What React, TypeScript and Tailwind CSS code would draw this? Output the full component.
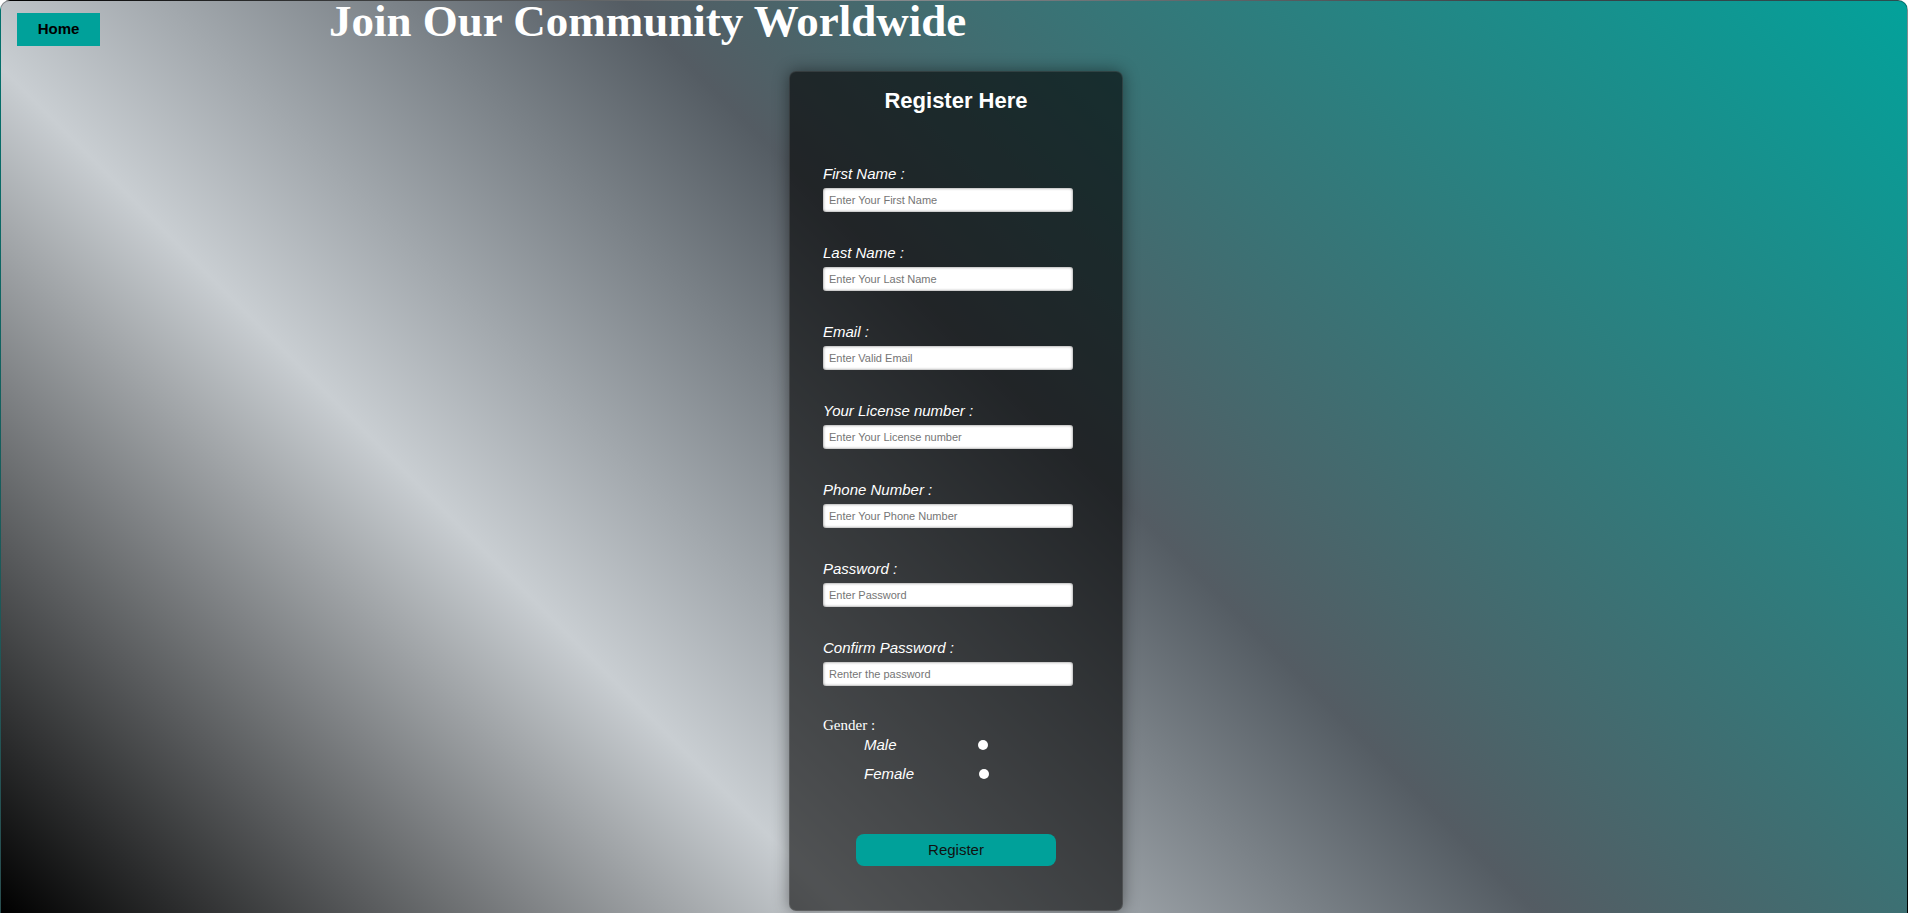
const fields = [
  { label: "First Name :", placeholder: "Enter Your First Name", type: "text" },
  { label: "Last Name :", placeholder: "Enter Your Last Name", type: "text" },
  { label: "Email :", placeholder: "Enter Valid Email", type: "email" },
  { label: "Your License number :", placeholder: "Enter Your License number", type: "text" },
  { label: "Phone Number :", placeholder: "Enter Your Phone Number", type: "tel" },
  { label: "Password :", placeholder: "Enter Password", type: "password" },
  { label: "Confirm Password :", placeholder: "Renter the password", type: "password" },
]

export default function App() {
  return (
    <div className="min-h-screen rounded-t-[10px] border-x border-t border-black/30 bg-[linear-gradient(45deg,#000_0%,#c9ced2_30%,#545c63_54.5%,#03a29b_100%)] font-['Liberation_Sans',Arial,sans-serif]">
      <header className="flex flex-row items-start">
        <a
          href="#"
          className="ml-[16px] mt-[12px] flex h-[33px] w-[83px] items-center justify-center bg-[#00a19a] text-[15px] font-bold text-black"
        >
          Home
        </a>
        <h1 className="ml-[229px] font-['Liberation_Serif','Times_New_Roman',serif] text-[45px] font-bold leading-[40px] text-white">
          Join Our Community Worldwide
        </h1>
      </header>

      <form
        className="ml-[788px] mt-[25px] flex h-[840px] w-[334px] flex-col rounded-[7px] border border-white/10 bg-black/60 px-[33px] pt-[16px] shadow-[0_0_16px_rgba(0,0,0,0.45)]"
        onSubmit={(e) => e.preventDefault()}
      >
        <h2 className="text-center text-[22px] font-bold leading-[26px] text-white">Register Here</h2>

        <div className="mt-[51px] flex flex-col gap-[32px]">
          {fields.map((f) => (
            <div key={f.label} className="flex flex-col">
              <label className="text-[15px] italic leading-[17px] text-white">{f.label}</label>
              <input
                type={f.type}
                placeholder={f.placeholder}
                className="mt-[6px] h-[24px] w-[250px] rounded-[3px] bg-white px-[6px] text-[11px] text-black shadow-[inset_0_0_3px_rgba(0,0,0,0.55)] outline-none placeholder:text-[#757575]"
              />
            </div>
          ))}

          <div className="-mt-[1px] flex flex-col">
            <span className="font-['Liberation_Serif','Times_New_Roman',serif] text-[15px] leading-[17px] text-white">
              Gender :
            </span>
            <label className="mt-[2px] flex flex-row items-center pl-[41px] text-[15px] italic leading-[17px] text-white">
              <span className="w-[114px]">Male</span>
              <input type="radio" name="gender" className="h-[10px] w-[10px] appearance-none rounded-full bg-white" />
            </label>
            <label className="mt-[12px] flex flex-row items-center pl-[41px] text-[15px] italic leading-[17px] text-white">
              <span className="w-[115px]">Female</span>
              <input type="radio" name="gender" className="h-[10px] w-[10px] appearance-none rounded-full bg-white" />
            </label>
          </div>
        </div>

        <button
          type="submit"
          className="mx-auto mt-[52px] h-[32px] w-[200px] rounded-[8px] bg-[#00a19a] text-[15px] text-[#111]"
        >
          Register
        </button>
      </form>
    </div>
  )
}
